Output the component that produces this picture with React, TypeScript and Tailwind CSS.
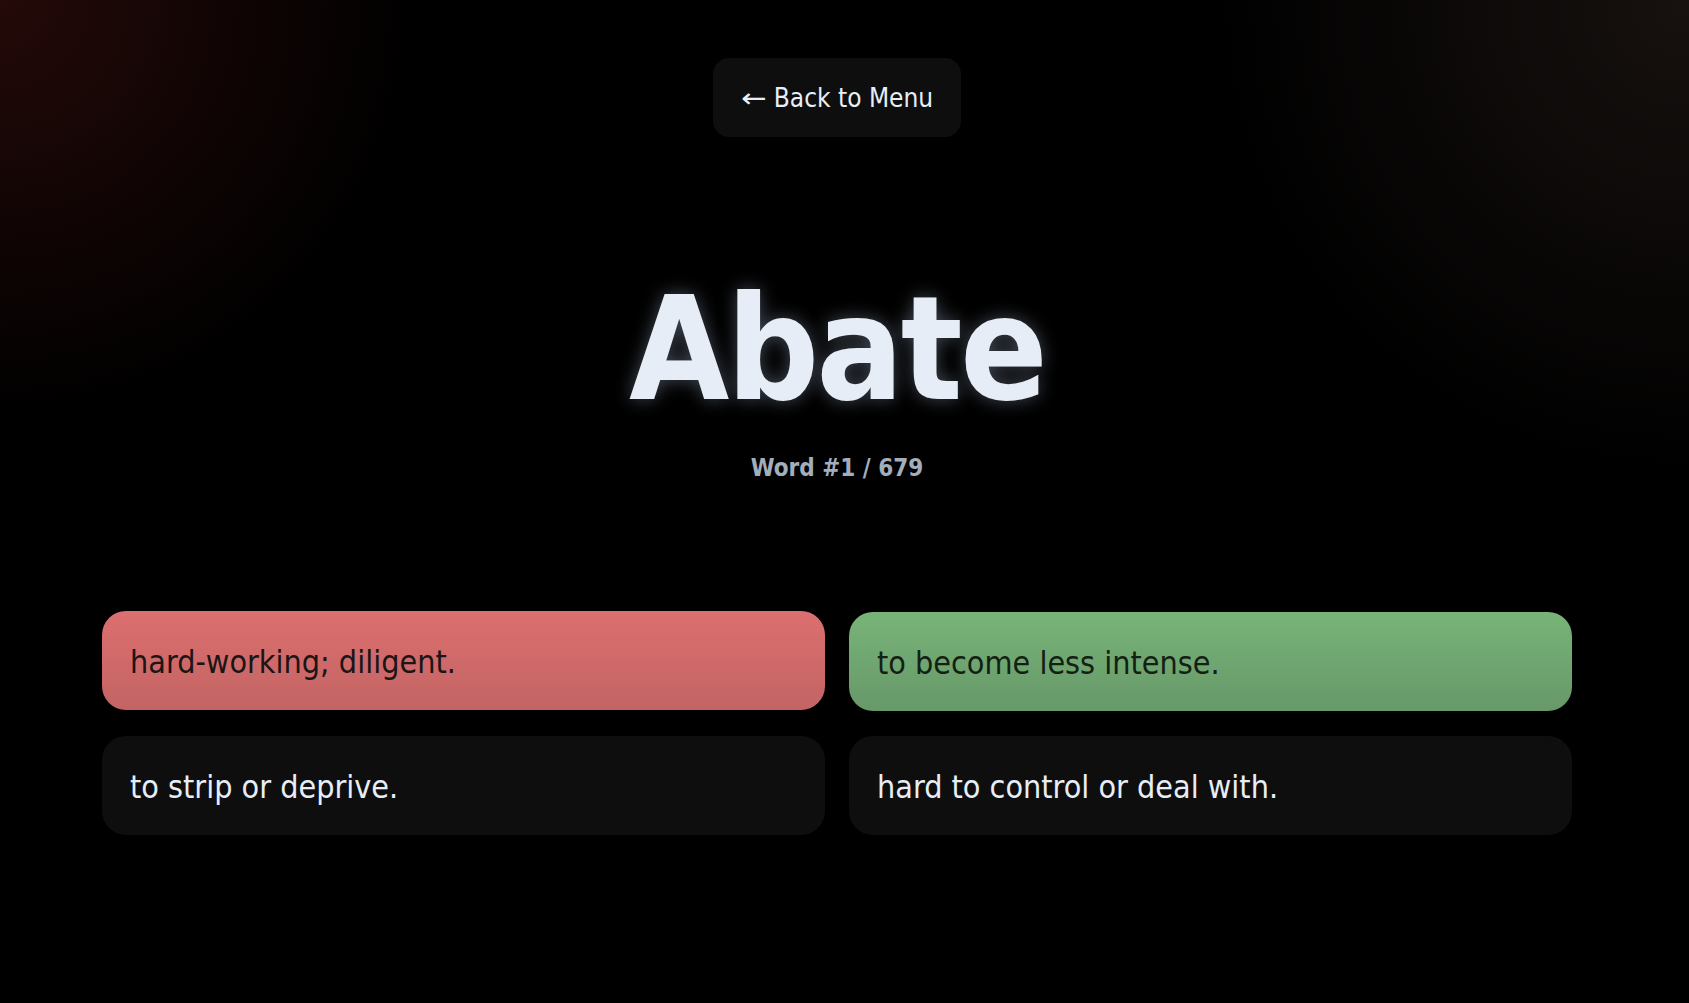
import { useState } from "react";

type Choice = {
  text: string;
  state: "wrong" | "right" | "idle";
};

const choices: Choice[] = [
  { text: "hard-working; diligent.", state: "wrong" },
  { text: "to become less intense.", state: "right" },
  { text: "to strip or deprive.", state: "idle" },
  { text: "hard to control or deal with.", state: "idle" },
];

const stateClasses: Record<Choice["state"], string> = {
  wrong: "bg-gradient-to-b from-[#dc6f6f] to-[#c36464] text-[#1b1515]",
  right: "translate-y-px bg-gradient-to-b from-[#78b478] to-[#679869] text-[#142014]",
  idle: "bg-[#0e0e0e] text-[#e7eef7]",
};

export default function App() {
  const [picked, setPicked] = useState<number | null>(0);

  return (
    <div
      className="min-h-screen w-full bg-black bg-[radial-gradient(circle_420px_at_0_0,rgba(58,16,14,0.62),transparent),radial-gradient(circle_480px_at_100%_0,rgba(42,32,28,0.55),transparent)]"
      style={{ fontFamily: '"DejaVu Sans Condensed", "DejaVu Sans", Verdana, sans-serif' }}
    >
      <div className="flex flex-col items-center pr-[15px] pt-[58px] pb-[160px]">
        <button
          type="button"
          className="flex h-[79px] items-center gap-[7px] rounded-2xl bg-[#0e0e0e] px-[28px] text-[26px] leading-none text-[#e7eef7]"
        >
          <span aria-hidden="true" className="inline-block w-[26px] scale-x-[1.3] text-center font-light">
            ←
          </span>
          <span>Back to Menu</span>
        </button>

        <h1 className="mt-[140px] text-[144px] font-bold leading-none tracking-[-0.02em] text-[#e7edf6] [text-shadow:0_0_18px_rgba(190,210,240,0.35)]">
          Abate
        </h1>
        <p className="mt-[35px] text-[24px] font-bold leading-none text-[#a3aebd]">
          Word #1 / 679
        </p>

        <div className="mt-[131px] grid w-[1470px] grid-cols-2 gap-x-[24px] gap-y-[26px]">
          {choices.map((choice, index) => (
            <button
              key={choice.text}
              type="button"
              onClick={() => setPicked(index)}
              className={`flex h-[99px] items-center rounded-3xl px-[28px] pt-[3px] text-left text-[32px] leading-normal ${stateClasses[choice.state]} ${picked === index ? "" : ""}`}
            >
              {choice.text}
            </button>
          ))}
        </div>
      </div>
    </div>
  );
}
